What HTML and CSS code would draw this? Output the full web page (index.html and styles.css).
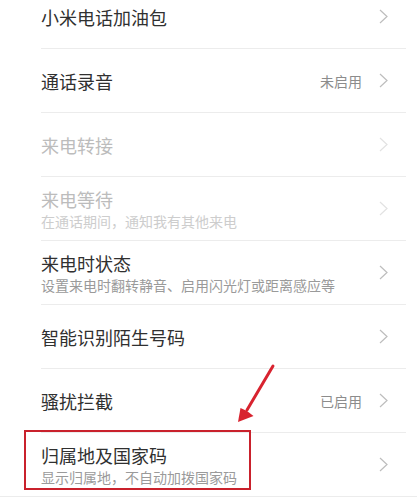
FILE: index.html
```html
<!DOCTYPE html>
<html lang="zh-CN">
<head>
    <meta charset="UTF-8">
    <meta name="viewport" content="width=device-width, initial-scale=1.0">
    <title>通话设置</title>
    <link rel="stylesheet" href="styles.css">
</head>
<body>
    <!-- Settings List -->
    <div class="list">
        <div class="row">
            <div class="row-inner">
                <div class="text"><div class="title">小米电话加油包</div></div>
                <svg class="chevron" viewBox="0 0 9 15"><polyline points="1,1 8,7.5 1,14"/></svg>
            </div>
        </div>

        <div class="row">
            <div class="row-inner">
                <div class="text"><div class="title">通话录音</div></div>
                <span class="value">未启用</span>
                <svg class="chevron" viewBox="0 0 9 15"><polyline points="1,1 8,7.5 1,14"/></svg>
            </div>
        </div>

        <div class="row disabled">
            <div class="row-inner">
                <div class="text"><div class="title">来电转接</div></div>
                <svg class="chevron" viewBox="0 0 9 15"><polyline points="1,1 8,7.5 1,14"/></svg>
            </div>
        </div>

        <div class="row disabled">
            <div class="row-inner">
                <div class="text">
                    <div class="title">来电等待</div>
                    <div class="sub">在通话期间，通知我有其他来电</div>
                </div>
                <svg class="chevron" viewBox="0 0 9 15"><polyline points="1,1 8,7.5 1,14"/></svg>
            </div>
        </div>

        <div class="row">
            <div class="row-inner">
                <div class="text">
                    <div class="title">来电时状态</div>
                    <div class="sub">设置来电时翻转静音、启用闪光灯或距离感应等</div>
                </div>
                <svg class="chevron" viewBox="0 0 9 15"><polyline points="1,1 8,7.5 1,14"/></svg>
            </div>
        </div>

        <div class="row">
            <div class="row-inner">
                <div class="text"><div class="title">智能识别陌生号码</div></div>
                <svg class="chevron" viewBox="0 0 9 15"><polyline points="1,1 8,7.5 1,14"/></svg>
            </div>
        </div>

        <div class="row">
            <div class="row-inner">
                <div class="text"><div class="title">骚扰拦截</div></div>
                <span class="value">已启用</span>
                <svg class="chevron" viewBox="0 0 9 15"><polyline points="1,1 8,7.5 1,14"/></svg>
            </div>
        </div>

        <div class="row row-last">
            <!-- Annotation -->
            <svg class="arrow" viewBox="0 0 48 64">
                <line x1="41" y1="4" x2="15" y2="48"/>
                <polygon points="6,60 8.5,46 15,49 21.5,54"/>
            </svg>
            <div class="highlight"></div>
            <div class="row-inner">
                <div class="text">
                    <div class="title">归属地及国家码</div>
                    <div class="sub">显示归属地，不自动加拨国家码</div>
                </div>
                <svg class="chevron" viewBox="0 0 9 15"><polyline points="1,1 8,7.5 1,14"/></svg>
            </div>
        </div>
    </div>
</body>
</html>
```

FILE: styles.css
```css
/* Global Styling */
body {
    margin: 0;
    background: #fff;
    font-family: "Noto Sans CJK SC", "Noto Sans", sans-serif;
    overflow: hidden;
}

/* List */
.list {
    margin-top: -15px;
    border-bottom: 1px solid #ececec;
}
.row {
    position: relative;
    padding: 0 11px 0 41px;
}
.row-inner {
    height: 63px;
    display: flex;
    align-items: center;
    border-bottom: 1px solid #ececec;
}
.row-last .row-inner {
    border-bottom: none;
}
.text {
    flex: 1;
}
.title {
    font-size: 18px;
    line-height: 24px;
    color: #303030;
}
.sub {
    font-size: 14px;
    line-height: 20px;
    color: #9a9a9a;
}
.value {
    font-size: 14px;
    color: #8c8c8c;
    margin-right: 17px;
}
.chevron {
    width: 9px;
    height: 15px;
    margin-right: 18px;
    fill: none;
    stroke: #bdbdbd;
    stroke-width: 1.2;
}

/* Disabled rows */
.disabled .title {
    color: #bcbcbc;
}
.disabled .sub {
    color: #cdcdcd;
}
.disabled .chevron {
    stroke: #e2e2e2;
}

/* Red annotation */
.highlight {
    position: absolute;
    left: 24px;
    top: -3px;
    width: 223px;
    height: 56px;
    border: 2px solid #c9212c;
}
.arrow {
    position: absolute;
    left: 232px;
    top: -71px;
    width: 48px;
    height: 64px;
}
.arrow line {
    stroke: #d8232f;
    stroke-width: 3;
    stroke-linecap: round;
}
.arrow polygon {
    fill: #d8232f;
}
```
